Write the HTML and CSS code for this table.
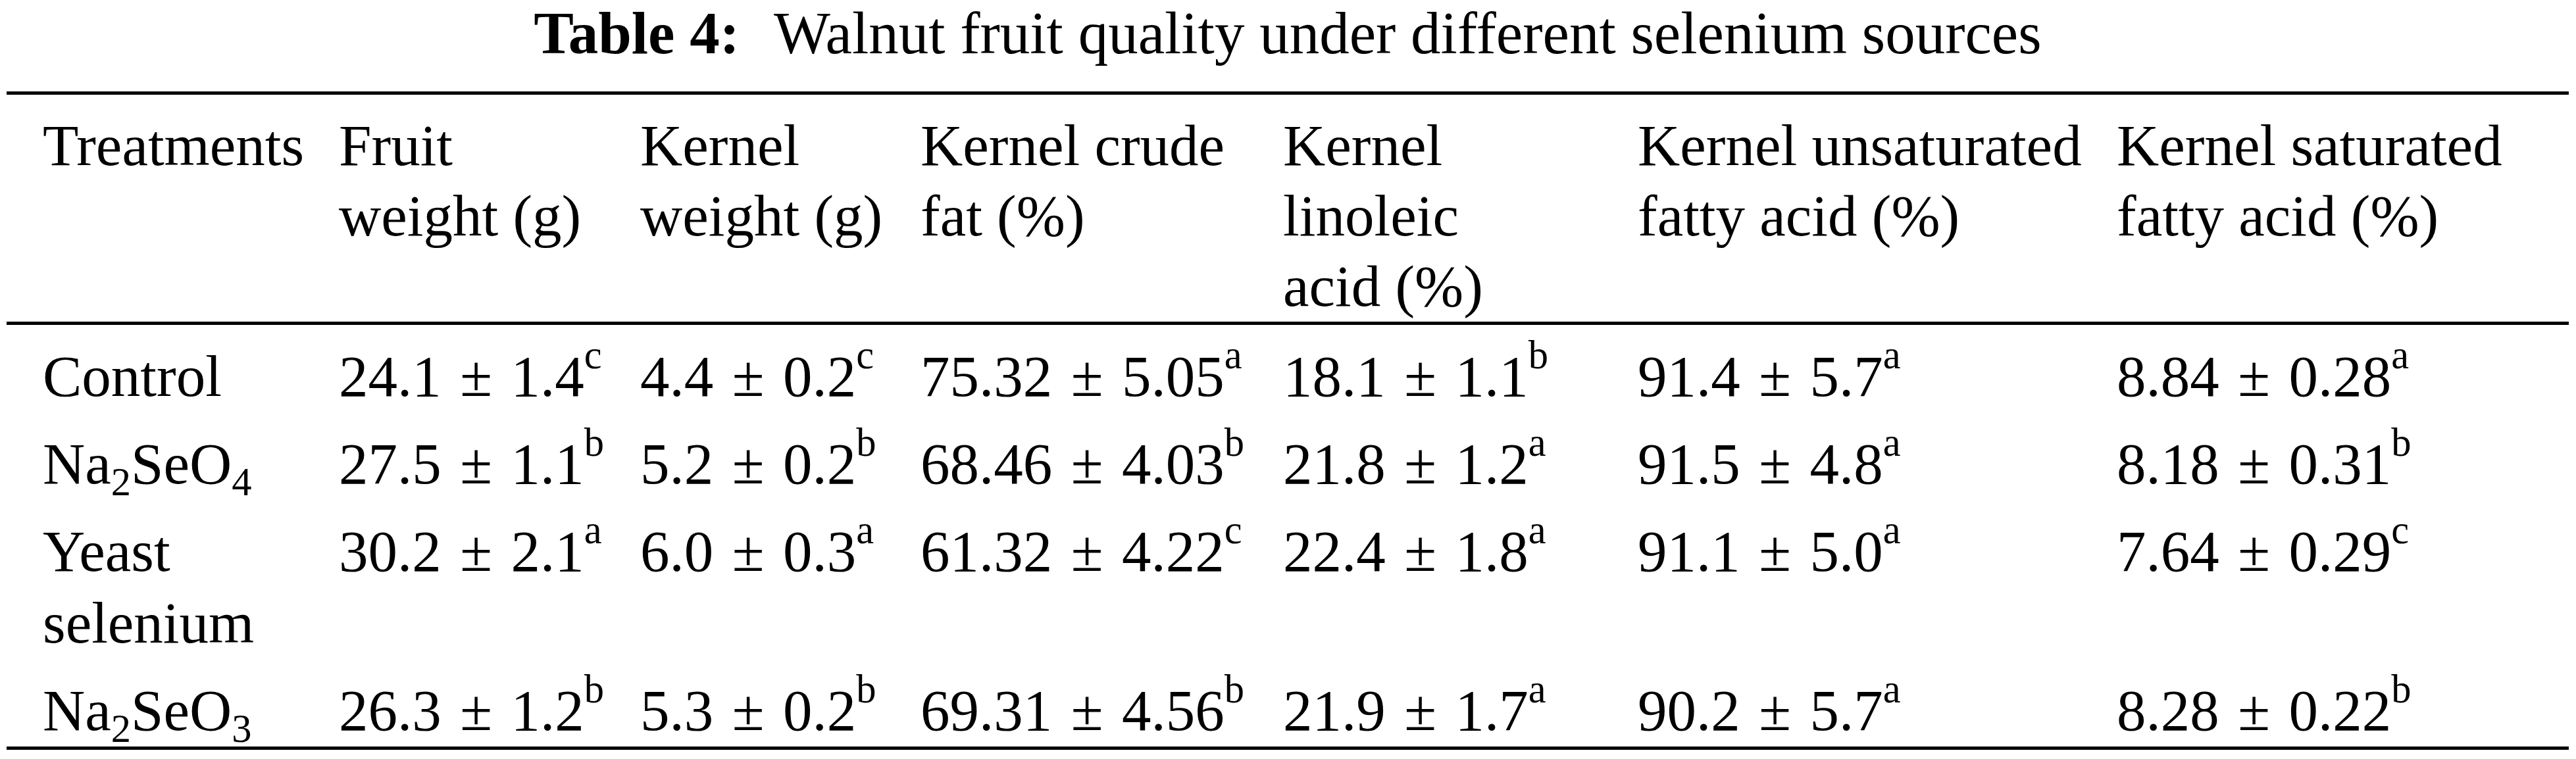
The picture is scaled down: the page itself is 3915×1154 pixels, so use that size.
FILE: index.html
```html
<!DOCTYPE html>
<html lang="en">
<head>
<meta charset="utf-8">
<title>Table 4</title>
<link rel="stylesheet" href="styles.css">
</head>
<body>
<div class="page">
  <div class="caption"><b class="label">Table 4:</b>Walnut fruit quality under different selenium sources</div>
  <table class="data-table">
    <colgroup>
      <col class="w1"><col class="w2"><col class="w3"><col class="w4"><col class="w5"><col class="w6"><col class="w7">
    </colgroup>
    <thead>
      <tr>
        <th class="c1">Treatments</th>
        <th class="c2">Fruit weight (g)</th>
        <th class="c3">Kernel weight (g)</th>
        <th class="c4">Kernel crude fat (%)</th>
        <th class="c5">Kernel linoleic acid (%)</th>
        <th class="c6">Kernel unsaturated fatty acid (%)</th>
        <th class="c7">Kernel saturated fatty acid (%)</th>
      </tr>
    </thead>
    <tbody>
      <tr>
        <td class="c1">Control</td>
        <td>24.1 ± 1.4<sup class="sig">c</sup></td>
        <td>4.4 ± 0.2<sup class="sig">c</sup></td>
        <td>75.32 ± 5.05<sup class="sig">a</sup></td>
        <td>18.1 ± 1.1<sup class="sig">b</sup></td>
        <td>91.4 ± 5.7<sup class="sig">a</sup></td>
        <td>8.84 ± 0.28<sup class="sig">a</sup></td>
      </tr>
      <tr>
        <td class="c1">Na<sub class="idx">2</sub>SeO<sub class="idx">4</sub></td>
        <td>27.5 ± 1.1<sup class="sig">b</sup></td>
        <td>5.2 ± 0.2<sup class="sig">b</sup></td>
        <td>68.46 ± 4.03<sup class="sig">b</sup></td>
        <td>21.8 ± 1.2<sup class="sig">a</sup></td>
        <td>91.5 ± 4.8<sup class="sig">a</sup></td>
        <td>8.18 ± 0.31<sup class="sig">b</sup></td>
      </tr>
      <tr>
        <td class="c1">Yeast selenium</td>
        <td>30.2 ± 2.1<sup class="sig">a</sup></td>
        <td>6.0 ± 0.3<sup class="sig">a</sup></td>
        <td>61.32 ± 4.22<sup class="sig">c</sup></td>
        <td>22.4 ± 1.8<sup class="sig">a</sup></td>
        <td>91.1 ± 5.0<sup class="sig">a</sup></td>
        <td>7.64 ± 0.29<sup class="sig">c</sup></td>
      </tr>
      <tr>
        <td class="c1">Na<sub class="idx">2</sub>SeO<sub class="idx">3</sub></td>
        <td>26.3 ± 1.2<sup class="sig">b</sup></td>
        <td>5.3 ± 0.2<sup class="sig">b</sup></td>
        <td>69.31 ± 4.56<sup class="sig">b</sup></td>
        <td>21.9 ± 1.7<sup class="sig">a</sup></td>
        <td>90.2 ± 5.7<sup class="sig">a</sup></td>
        <td>8.28 ± 0.22<sup class="sig">b</sup></td>
      </tr>
    </tbody>
  </table>
</div>
</body>
</html>
```

FILE: styles.css
```css
html, body {
  margin: 0;
  padding: 0;
  background: #ffffff;
}

body {
  font-family: "Liberation Serif", "Times New Roman", serif;
  font-size: 89px;
  color: #000000;
}

.page {
  padding: 0 11px 0 10px;
}

.caption {
  font-size: 91px;
  text-align: center;
  line-height: 102px;
  margin: 0 0 37px;
  white-space: nowrap;
}

.label {
  font-weight: bold;
  margin-right: 0.57em;
}

.data-table {
  width: 100%;
  table-layout: fixed;
  border-collapse: separate;
  border-spacing: 0;
  border-top: 5px solid #000000;
  border-bottom: 5px solid #000000;
}

.w1 { width: 505px; }
.w2 { width: 458px; }
.w3 { width: 426px; }
.w4 { width: 551px; }
.w5 { width: 539px; }
.w6 { width: 728px; }
.w7 { width: 687px; }

.data-table th {
  font-weight: normal;
  text-align: left;
  vertical-align: top;
  line-height: 107px;
  padding: 24px 48px 0 0;
  border-bottom: 5px solid #000000;
}

.data-table td {
  text-align: left;
  vertical-align: top;
  line-height: 109px;
  padding: 24px 48px 0 0;
  white-space: nowrap;
  word-spacing: 0.07em;
}

.data-table th.c1,
.data-table td.c1 {
  padding-left: 55px;
  padding-right: 0;
  white-space: normal;
  word-spacing: normal;
}

.data-table th.c5 {
  padding-right: 129px;
}

.data-table th.c6 {
  padding-right: 36px;
}

.data-table th.c7 {
  padding-right: 36px;
}

.sig {
  font-size: 0.68em;
  line-height: 0;
  vertical-align: 0.7em;
}

.idx {
  font-size: 0.68em;
  line-height: 0;
  vertical-align: -0.3em;
}
```
